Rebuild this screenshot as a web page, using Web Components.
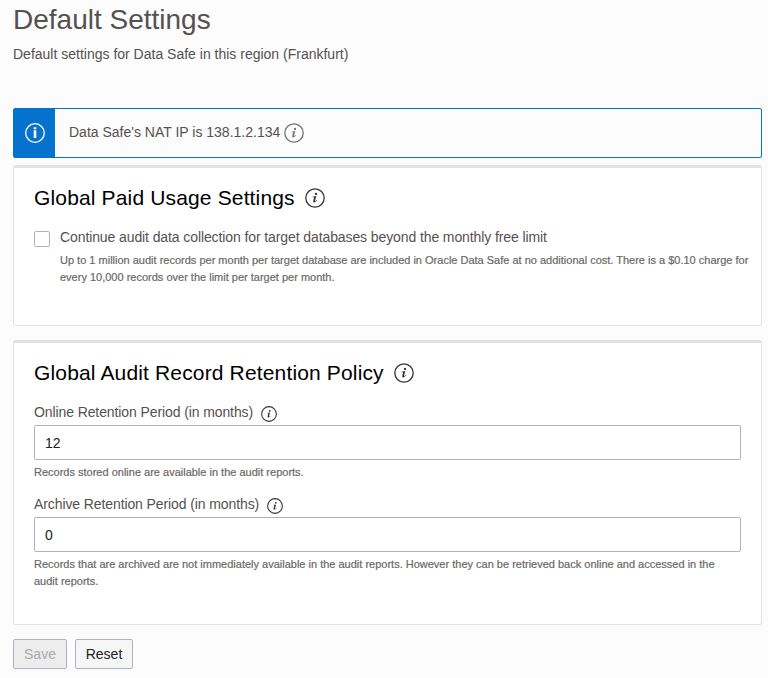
<!DOCTYPE html>
<html lang="en">
<head>
<meta charset="utf-8">
<title>Default Settings</title>
<style>
body{margin:0;background:#fcfcfc;font:14px/20px "Liberation Sans",Arial,sans-serif;color:#55514f}
</style>
</head>
<body>
<settings-page></settings-page>
<script>
function define(name, html) {
  const template = document.createElement('template');
  template.innerHTML = html;
  customElements.define(name, class extends HTMLElement {
    constructor() {
      super();
      this.attachShadow({mode: 'open'}).append(template.content.cloneNode(true));
    }
  });
}

define('info-icon', `
<style>
:host{display:block;flex:none;width:var(--size,20px);height:var(--size,20px);color:#444}
svg{display:block;width:100%;height:100%}
</style>
<svg viewBox="0 0 20 20"><circle cx="10" cy="10" r="9.2" fill="none" stroke="currentColor" stroke-width="1.3"/><circle cx="11" cy="6" r="1.15" fill="currentColor"/><path d="M7.6 8.7L11.3 8.1L10 12.9Q9.8 13.7 10.4 13.3L11.7 12.1L12.1 12.5Q10.4 14.5 9 14.5Q7.8 14.5 8.2 13.1L9.1 9.6Q9.2 9.2 8.8 9.2L7.5 9.2Z" fill="currentColor"/></svg>`);

define('info-banner', `
<style>
:host{display:flex;box-sizing:border-box;height:50px;border:1px solid #0572ce;border-radius:2px}
.mark{width:41px;display:grid;place-items:center;background:#0572ce;padding-left:1px;box-sizing:border-box}
.text{display:flex;padding:13px 0 0 14px;gap:4px}
info-icon{color:#737373;margin-top:1px}
</style>
<div class="mark"><svg width="20" height="20" viewBox="0 0 20 20"><circle cx="10" cy="10" r="9.3" fill="none" stroke="#fff" stroke-width="1.3"/><path d="M8.7 4.2h2.6v2H8.7zM8.7 7.3h2.6v7.7H8.7z" fill="#fff"/></svg></div>
<div class="text"><slot></slot><info-icon></info-icon></div>`);

define('settings-card', `
<style>
:host{display:block;box-sizing:border-box;background:#fff;border:1px solid #e3e3e7;border-top-width:3px;border-radius:3px;padding:17px 20px 0}
h2{display:flex;align-items:center;gap:10px;margin:0;font-weight:400;font-size:21px;line-height:26px;letter-spacing:.15px;color:#000}
info-icon{color:#333}
</style>
<h2><slot name="heading"></slot><info-icon></info-icon></h2>
<slot></slot>`);

define('check-option', `
<style>
:host{display:grid;grid-template-columns:16px 1fr;column-gap:10px;margin:16px -10px 0 0}
.box{box-sizing:border-box;width:16px;height:16px;border:1px solid #b0b3bd;border-radius:2px;margin-top:4px;background:#fff}
.label{letter-spacing:-.1px}
.hint{font-size:11px;line-height:17px;color:#6b6866;-webkit-text-stroke:.2px #6b6866;margin-top:5px}
</style>
<div class="box"></div>
<div><div class="label"><slot name="label"></slot></div><div class="hint"><slot></slot></div></div>`);

define('number-field', `
<style>
:host{display:block}
.label{display:flex;gap:8px;letter-spacing:-.1px}
info-icon{--size:16px;margin-top:4px;color:#333}
.input{box-sizing:border-box;height:35px;border:1px solid #b0b3bd;border-radius:2px;padding:7px 10px;color:#222;margin-top:3px;background:#fff}
.hint{font-size:11px;line-height:17px;color:#6b6866;-webkit-text-stroke:.2px #6b6866;margin-top:4px}
</style>
<div class="label"><slot name="label"></slot><info-icon></info-icon></div>
<div class="input"><slot name="value"></slot></div>
<div class="hint"><slot></slot></div>`);

define('push-button', `
<style>
:host{display:block;box-sizing:border-box;height:30px;border:1px solid #b0b3bd;border-radius:2px;background:#f6f6f6;color:#222;padding:4px 0;text-align:center;width:58px}
:host([disabled]){background:#ededed;color:#aaa;width:54px}
</style>
<slot></slot>`);

define('settings-page', `
<style>
:host{display:block;padding:3px 6px 0 13px}
h1{margin:0;font-weight:400;font-size:28px;line-height:34px}
.sub{margin-top:7px}
info-banner{margin-top:44px}
.usage{height:161px;margin-top:7px}
.retention{height:285px;margin-top:14px}
.first{margin-top:16px}
.second{margin-top:13px}
.actions{display:flex;gap:8px;margin-top:14px}
</style>
<h1>Default Settings</h1>
<div class="sub">Default settings for Data Safe in this region (Frankfurt)</div>
<info-banner><span>Data Safe's NAT IP is 138.1.2.134</span></info-banner>
<settings-card class="usage"><span slot="heading">Global Paid Usage Settings</span>
<check-option><span slot="label">Continue audit data collection for target databases beyond the monthly free limit</span>Up to 1 million audit records per month per target database are included in Oracle Data Safe at no additional cost. There is a $0.10 charge for<br>every 10,000 records over the limit per target per month.</check-option>
</settings-card>
<settings-card class="retention"><span slot="heading">Global Audit Record Retention Policy</span>
<number-field class="first"><span slot="label">Online Retention Period (in months)</span><span slot="value">12</span>Records stored online are available in the audit reports.</number-field>
<number-field class="second"><span slot="label">Archive Retention Period (in months)</span><span slot="value">0</span>Records that are archived are not immediately available in the audit reports. However they can be retrieved back online and accessed in the<br>audit reports.</number-field>
</settings-card>
<div class="actions"><push-button disabled>Save</push-button><push-button>Reset</push-button></div>`);
</script>
</body>
</html>
